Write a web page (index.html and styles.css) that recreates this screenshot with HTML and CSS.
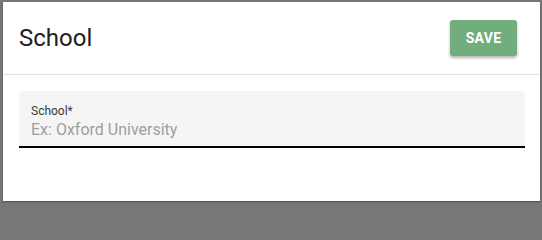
FILE: index.html
```html
<!DOCTYPE html>
<html lang="en">
<head>
<meta charset="utf-8">
<title>School</title>
<link rel="stylesheet" href="styles.css">
</head>
<body>
<div class="dialog">
  <header class="dialog-header">
    <h1 class="dialog-title">School</h1>
    <button class="btn-save" type="button">Save</button>
  </header>
  <div class="dialog-body">
    <label class="field">
      <span class="field-label">School*</span>
      <input class="field-input" type="text" placeholder="Ex: Oxford University">
    </label>
  </div>
</div>
</body>
</html>
```
FILE: styles.css
```css
html, body {
  margin: 0;
  padding: 0;
}
body {
  background: #777777;
  font-family: Roboto, "Liberation Sans", sans-serif;
  padding: 2px 2px 2px 3px;
  box-sizing: border-box;
  height: 203px;
}
.dialog {
  background: #ffffff;
  width: 537px;
  height: 199px;
  box-shadow: 0 1px 2px rgba(0,0,0,0.35);
  display: flex;
  flex-direction: column;
}
.dialog-header {
  height: 72px;
  display: flex;
  align-items: center;
  justify-content: space-between;
  padding: 0 23px 0 16px;
  border-bottom: 1px solid #e0e0e0;
}
.dialog-title {
  margin: 0;
  font-size: 24px;
  font-weight: 400;
  color: #212121;
  line-height: 1;
}
.btn-save {
  width: 67px;
  height: 36px;
  border: none;
  border-radius: 3px;
  background: #71ad7d;
  color: #ffffff;
  font-family: Roboto, "Liberation Sans", sans-serif;
  font-weight: 700;
  font-size: 14px;
  text-transform: uppercase;
  letter-spacing: 0.3px;
  box-shadow: 0 2px 3px rgba(0,0,0,0.3);
  padding: 0;
}
.dialog-body {
  padding: 16px 15px 0 16px;
}
.field {
  display: flex;
  flex-direction: column;
  background: #f5f5f5;
  border-radius: 4px 4px 0 0;
  border-bottom: 2px solid #000000;
  padding: 13px 12px 0 12px;
  box-sizing: content-box;
  height: 42px;
}
.field-label {
  font-size: 12px;
  color: #3a3a3a;
  line-height: 14px;
}
.field-input {
  border: none;
  background: transparent;
  outline: none;
  padding: 0;
  margin: 2px 0 0 0;
  font-family: Roboto, "Liberation Sans", sans-serif;
  font-size: 16px;
  line-height: 20px;
  height: 20px;
  color: #212121;
}
.field-input::placeholder {
  color: #9e9e9e;
}
```
